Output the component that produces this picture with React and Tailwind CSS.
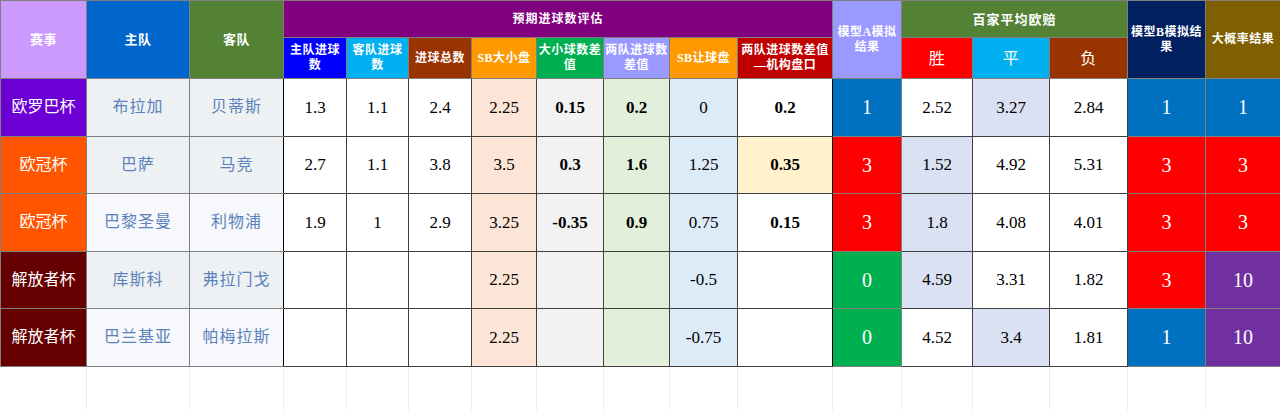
import React from "react";

const BLUE = "bg-[#0070c0]";
const RED = "bg-[#ff0000]";
const GREEN = "bg-[#00b050]";
const PURPLE = "bg-[#7030a0]";
const HL = "bg-[#d9e1f2]";

const rows = [
  { comp: "欧罗巴杯", compBg: "bg-[#6c00d4]", home: "布拉加", away: "贝蒂斯", teamBg: "bg-[#eef1f4]", hg: "1.3", ag: "1.1", tot: "2.4", sbou: "2.25", oudiff: "0.15", gdiff: "0.2", sbah: "0", inst: "0.2", instBg: "bg-white", a: "1", aBg: BLUE, w: "2.52", d: "3.27", l: "2.84", hl: "d", b: "1", bBg: BLUE, p: "1", pBg: BLUE },
  { comp: "欧冠杯", compBg: "bg-[#ff5500]", home: "巴萨", away: "马竞", teamBg: "bg-[#eef1f4]", hg: "2.7", ag: "1.1", tot: "3.8", sbou: "3.5", oudiff: "0.3", gdiff: "1.6", sbah: "1.25", inst: "0.35", instBg: "bg-[#fff2cc]", a: "3", aBg: RED, w: "1.52", d: "4.92", l: "5.31", hl: "w", b: "3", bBg: RED, p: "3", pBg: RED },
  { comp: "欧冠杯", compBg: "bg-[#ff5500]", home: "巴黎圣曼", away: "利物浦", teamBg: "bg-[#f6f8fb]", hg: "1.9", ag: "1", tot: "2.9", sbou: "3.25", oudiff: "-0.35", gdiff: "0.9", sbah: "0.75", inst: "0.15", instBg: "bg-white", a: "3", aBg: RED, w: "1.8", d: "4.08", l: "4.01", hl: "w", b: "3", bBg: RED, p: "3", pBg: RED },
  { comp: "解放者杯", compBg: "bg-[#660000]", home: "库斯科", away: "弗拉门戈", teamBg: "bg-[#eef1f4]", hg: "", ag: "", tot: "", sbou: "2.25", oudiff: "", gdiff: "", sbah: "-0.5", inst: "", instBg: "bg-white", a: "0", aBg: GREEN, w: "4.59", d: "3.31", l: "1.82", hl: "w", b: "3", bBg: RED, p: "10", pBg: PURPLE },
  { comp: "解放者杯", compBg: "bg-[#660000]", home: "巴兰基亚", away: "帕梅拉斯", teamBg: "bg-[#f6f8fb]", hg: "", ag: "", tot: "", sbou: "2.25", oudiff: "", gdiff: "", sbah: "-0.75", inst: "", instBg: "bg-white", a: "0", aBg: GREEN, w: "4.52", d: "3.4", l: "1.81", hl: "d", b: "1", bBg: BLUE, p: "10", pBg: PURPLE },
];

const widths = [86, 103, 94, 63, 62, 63, 65, 67, 66, 68, 95, 69, 71, 77, 78, 78, 75];

// 表头单元格
const H = "border border-[#7f7f7f] text-white font-bold text-center align-middle leading-[15px] tracking-[0.5px] whitespace-nowrap px-0";
const C = "border border-[#7f7f7f] text-center align-middle";
const N = "border border-[#404040] text-center align-middle text-[17px] text-black";

const App = () => {
  return (
    <div className="w-[1280px] h-[410px] bg-white overflow-hidden" style={{ fontFamily: '"Liberation Serif", "Noto Sans CJK SC", serif' }}>
      <table className="table-fixed border-collapse w-[1280px]">
        <colgroup>
          {widths.map((w, i) => (
            <col key={i} style={{ width: w }} />
          ))}
        </colgroup>
        <thead>
          <tr className="h-[37px]">
            <th rowSpan={2} className={`${H} bg-[#cc99ff] text-[13px]`}>赛事</th>
            <th rowSpan={2} className={`${H} bg-[#0066cc] text-[13px]`}>主队</th>
            <th rowSpan={2} className={`${H} bg-[#548235] text-[13px]`}>客队</th>
            <th colSpan={8} className={`${H} bg-[#800080] text-[12px] tracking-[1px]`}>预期进球数评估</th>
            <th rowSpan={2} className={`${H} bg-[#9999ff] text-[12px]`}>模型A模拟<br />结果</th>
            <th colSpan={3} className={`${H} bg-[#548235] text-[13px] tracking-[1px]`}>百家平均欧赔</th>
            <th rowSpan={2} className={`${H} bg-[#002060] text-[12px]`}>模型B模拟结<br />果</th>
            <th rowSpan={2} className={`${H} bg-[#7f6000] text-[12px]`}>大概率结果</th>
          </tr>
          <tr className="h-[41px]">
            <th className={`${H} bg-[#0000ff] text-[12px]`}>主队进球<br />数</th>
            <th className={`${H} bg-[#00b0f0] text-[12px]`}>客队进球<br />数</th>
            <th className={`${H} bg-[#993300] text-[12px]`}>进球总数</th>
            <th className={`${H} bg-[#ff9900] text-[12px]`}>SB大小盘</th>
            <th className={`${H} bg-[#00b050] text-[12px]`}>大小球数差<br />值</th>
            <th className={`${H} bg-[#9999ff] text-[12px]`}>两队进球数<br />差值</th>
            <th className={`${H} bg-[#ff9900] text-[12px]`}>SB让球盘</th>
            <th className={`${H} bg-[#c00000] text-[12px]`}>两队进球数差值<br />—机构盘口</th>
            <th className={`${H} bg-[#ff0000] text-[16px] font-normal`}>胜</th>
            <th className={`${H} bg-[#00b0f0] text-[16px] font-normal`}>平</th>
            <th className={`${H} bg-[#993300] text-[16px] font-normal`}>负</th>
          </tr>
        </thead>
        <tbody>
          {rows.map((r, i) => (
            <tr key={i} className="h-[57.5px]">
              <td className={`${C} ${r.compBg} text-white text-[16px]`}>{r.comp}</td>
              <td className={`${C} ${r.teamBg} text-[#5b82ba] text-[16px] tracking-[1px]`}>{r.home}</td>
              <td className={`${C} ${r.teamBg} text-[#5b82ba] text-[16px] tracking-[1px] border-r-black`}>{r.away}</td>
              <td className={`${N} bg-white`}>{r.hg}</td>
              <td className={`${N} bg-white`}>{r.ag}</td>
              <td className={`${N} bg-white`}>{r.tot}</td>
              <td className={`${N} bg-[#fce4d6]`}>{r.sbou}</td>
              <td className={`${N} bg-[#f2f2f2] font-bold`}>{r.oudiff}</td>
              <td className={`${N} bg-[#e2efda] font-bold`}>{r.gdiff}</td>
              <td className={`${N} bg-[#ddebf7]`}>{r.sbah}</td>
              <td className={`${N} ${r.instBg} font-bold border-r-black`}>{r.inst}</td>
              <td className={`${C} ${r.aBg} text-white text-[20px]`}>{r.a}</td>
              <td className={`${N} ${r.hl === "w" ? HL : "bg-white"} border-[#7f7f7f]`}>{r.w}</td>
              <td className={`${N} ${r.hl === "d" ? HL : "bg-white"} border-[#7f7f7f]`}>{r.d}</td>
              <td className={`${N} bg-white border-[#7f7f7f]`}>{r.l}</td>
              <td className={`${C} ${r.bBg} text-white text-[20px]`}>{r.b}</td>
              <td className={`${C} ${r.pBg} text-white text-[20px]`}>{r.p}</td>
            </tr>
          ))}
          <tr className="h-[44px]">
            {widths.map((w, i) => (
              <td key={i} className={`border-x border-[#ececec] ${i === 0 ? "border-l-white" : ""} ${i >= 3 && i <= 10 ? "border-t-black" : ""}`}></td>
            ))}
          </tr>
        </tbody>
      </table>
    </div>
  );
};

export default App;
